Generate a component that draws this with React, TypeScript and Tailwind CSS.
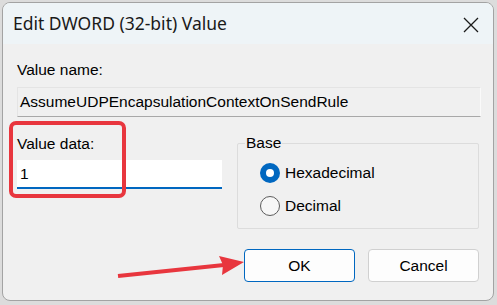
import React, {useState} from "react";

const body = {fontFamily: '"Liberation Sans", Arial, sans-serif'};

const Radio = ({checked, label, onClick}) => (
    <button onClick={onClick} className="flex items-center gap-[5px] h-[22px] text-[15.5px] text-black">
        {checked ? (
            <span className="w-[20px] h-[20px] rounded-full bg-[#0067c0] flex items-center justify-center">
                <span className="w-[8px] h-[8px] rounded-full bg-white"/>
            </span>
        ) : (
            <span className="w-[20px] h-[20px] rounded-full border border-[#5c5c5c] bg-[#f7f7f7]"/>
        )}
        <span>{label}</span>
    </button>
)

export default function App() {
    const [hex, setHex] = useState(true)
    const [data, setData] = useState("1")

    return (
        <div className="relative w-[497px] h-[305px] bg-[#dcdcdc] pl-[2px] pt-[2px] overflow-hidden" style={body}>
            <div className="w-[492px] h-[299px] rounded-[8px] border border-[#a3a3a3] bg-[#f0f0f0] overflow-hidden flex flex-col">
                {/* title bar */}
                <div className="h-[41px] bg-[#eef4f7] flex items-center justify-between pl-[10px] pr-[14px]">
                    <span className="text-[17.5px] text-[#1a1a1a]"
                          style={{fontFamily: '"Noto Sans", "Open Sans", sans-serif'}}>
                        Edit DWORD (32-bit) Value
                    </span>
                    <svg width="16" height="16" viewBox="0 0 16 16" className="mt-[2px]">
                        <path d="M1 1 L15 15 M15 1 L1 15" stroke="#1a1a1a" strokeWidth="1.3"/>
                    </svg>
                </div>

                <div className="flex-1 flex flex-col px-[14px]">
                    <div className="mt-[17px] h-[18px] leading-[18px] text-[15.5px] text-black">Value name:</div>
                    <div className="mt-[8px] h-[30px] w-[464px] flex items-center pl-[2px] text-[15.5px] text-black border border-[#e4e4e4] border-b-[#a8a8a8] border-r-[#fafafa] bg-[#f0f0f0]">
                        AssumeUDPEncapsulationContextOnSendRule
                    </div>

                    <div className="flex mt-[18px]">
                        <div className="w-[221px] flex flex-col">
                            <div className="h-[18px] leading-[18px] text-[15.5px] text-black">Value data:</div>
                            <input value={data} onChange={e => setData(e.target.value)}
                                   className="mt-[7px] w-[205px] h-[29px] bg-white border-b-2 border-[#0067c0] pl-[3px] text-[15.5px] text-black outline-none"/>
                        </div>
                        <div className="relative w-[243px] mt-[8px] h-[86px] border border-[#dcdcdc] rounded-[2px] pl-[22px] pt-[18px] flex flex-col gap-[11px]">
                            <span className="absolute -top-[10px] left-[7px] px-[1px] bg-[#f0f0f0] text-[15.5px] leading-[18px] text-black">Base</span>
                            <Radio checked={hex} label="Hexadecimal" onClick={() => setHex(true)}/>
                            <Radio checked={!hex} label="Decimal" onClick={() => setHex(false)}/>
                        </div>
                    </div>

                    <div className="flex justify-end gap-[13px] mt-[20px]">
                        <button className="w-[111px] h-[33px] rounded-[4px] border border-[#0067c0] bg-[#fdfdfd] text-[15.5px] text-black">
                            OK
                        </button>
                        <button className="w-[111px] h-[33px] rounded-[4px] border border-[#d0d0d0] bg-[#fdfdfd] text-[15.5px] text-black">
                            Cancel
                        </button>
                    </div>
                </div>
            </div>

            {/* annotation: red highlight box */}
            <div className="absolute left-[9px] top-[121px] w-[117px] h-[77px] border-4 border-[#e8363e] rounded-[7px]"/>

            {/* annotation: red arrow */}
            <svg className="absolute left-0 top-0 pointer-events-none" width="497" height="305">
                <line x1="118" y1="276" x2="224" y2="265" stroke="#e8363e" strokeWidth="4"/>
                <polygon points="244,262 219,256 223,265 222,275" fill="#e8363e"/>
            </svg>
        </div>
    )
}
